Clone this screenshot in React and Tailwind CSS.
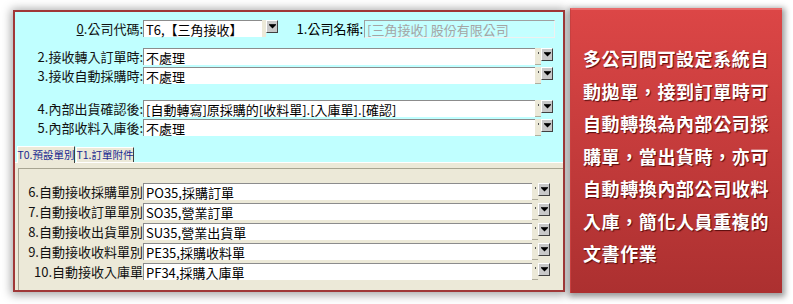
const cjk = { fontFamily: '"Noto Sans CJK TC", "Noto Sans CJK SC", sans-serif' };

const upper = [
  { label: "2.接收轉入訂單時:", value: "不處理" },
  { label: "3.接收自動採購時:", value: "不處理" },
];
const upper2 = [
  { label: "4.內部出貨確認後:", value: "[自動轉寫]原採購的[收料單].[入庫單].[確認]" },
  { label: "5.內部收料入庫後:", value: "不處理" },
];
const lower = [
  { label: "6.自動接收採購單別", value: "PO35,採購訂單" },
  { label: "7.自動接收訂單單別", value: "SO35,營業訂單" },
  { label: "8.自動接收出貨單別", value: "SU35,營業出貨單" },
  { label: "9.自動接收收料單別", value: "PE35,採購收料單" },
  { label: "10.自動接收入庫單", value: "PF34,採購入庫單" },
];
const note = [
  "多公司間可設定系統自",
  "動拋單，接到訂單時可",
  "自動轉換為內部公司採",
  "購單，當出貨時，亦可",
  "自動轉換內部公司收料",
  "入庫，簡化人員重複的",
  "文書作業",
];

function DropBtn() {
  return (
    <div className="w-[12px] h-[13px] bg-[#c8c8c8] border-t border-l border-white border-r border-b border-r-[#404040] border-b-[#404040] flex items-center justify-center">
      <svg width="7" height="5" viewBox="0 0 7 5">
        <rect x="0" y="0" width="7" height="1" fill="#222" />
        <path d="M0 1 H7 L3.5 4.5 Z" fill="#000" />
      </svg>
    </div>
  );
}

function Combo({ value, tail = "bg-[#ece9d8]" }) {
  return (
    <div className="flex-1 flex h-[19px]">
      <div className="flex-1 h-[17px] flex items-center bg-white border-t border-l border-[#8c8c8c] pl-[2px] text-[13px] leading-none whitespace-nowrap overflow-hidden text-black">
        {value}
      </div>
      <div className={"w-[6px] h-[17px] relative border-b border-[#b0ad9c] " + tail}>
        <div className="absolute left-[3px] top-[4px] w-[1px] h-[2px] bg-[#555]" />
      </div>
      <DropBtn />
    </div>
  );
}

function Row({ label, value, labelW, tail }) {
  return (
    <div className="flex items-start h-[19px]">
      <div className="h-[17px] flex items-center justify-end text-[13px] leading-none text-[#111] whitespace-nowrap" style={{ width: labelW }}>
        {label}
      </div>
      <Combo value={value} tail={tail} />
    </div>
  );
}

export default function App() {
  return (
    <div className="w-[793px] h-[304px] bg-white flex items-start pl-[13px] pt-[8px] gap-[5px]" style={cjk}>
      {/* MAIN FORM */}
      <div className="w-[552px] h-[282px] mt-[2px] border-2 border-[#a03838] bg-[#c0ffff] flex flex-col shadow-[0_1px_9px_2px_rgba(0,0,0,0.35)]">
        <div className="pt-[8px] pr-[10px] flex flex-col">
          <div className="flex items-start h-[19px]">
            <div className="w-[128px] h-[17px] flex items-center justify-end text-[13px] leading-none text-[#111]">
              <span className="underline">0</span>.公司代碼:
            </div>
            <div className="w-[135px] flex h-[19px]">
              <div className="flex-1 h-[17px] flex items-center bg-white border-t border-l border-[#8c8c8c] pl-[2px] text-[13px] leading-none whitespace-nowrap">
                T6,【三角接收】
              </div>
              <div className="w-[4px] h-[17px] bg-[#ece9d8]" />
              <DropBtn />
            </div>
            <div className="w-[85px] h-[17px] flex items-center justify-end text-[13px] leading-none text-black">
              1.公司名稱:
            </div>
            <div className="flex-1 ml-[1px] mr-[-2px] h-[18px] flex items-center border-t border-l border-[#a0a0a0] border-r border-b border-r-[#f0f0f0] border-b-[#f0f0f0] pl-[2px] text-[13px] leading-none text-[#a4a4a4] bg-[#c4ffff]">
              [三角接收] 股份有限公司
            </div>
          </div>

          <div className="mt-[9px]">
            {upper.map((r) => (
              <Row key={r.label} {...r} labelW={128} tail="bg-[#ece9d8]" />
            ))}
          </div>
          <div className="mt-[14px]">
            {upper2.map((r) => (
              <Row key={r.label} {...r} labelW={128} tail="bg-[#ece9d8]" />
            ))}
          </div>
        </div>

        {/* TABS */}
        <div className="mt-[7px] h-[17px] pl-[2px] flex items-end gap-[1px] text-[10.5px] leading-none text-[#1a2a90] whitespace-nowrap">
          <div className="w-[58px] h-[17px] bg-[#ece9d8] border-t border-l border-white border-r border-r-[#404040] flex items-center justify-center relative z-10 mb-[-1px]">
            T0.預設單別
          </div>
          <div className="w-[58px] h-[15px] bg-[#ece9d8] border-t border-l border-white border-r border-r-[#404040] flex items-center justify-center">
            T1.訂單附件
          </div>
        </div>

        {/* TAB PAGE */}
        <div className="flex-1 bg-[#ece9d8] border-t border-white pt-[5px] pl-[3px]">
          <div className="h-full border-t border-l border-[#a8a592] pt-[14px] pr-[13px]">
            {lower.map((r) => (
              <div key={r.label} className="mb-[1px]">
                <Row {...r} labelW={124} tail="bg-[#ece9d8]" />
              </div>
            ))}
          </div>
        </div>
      </div>

      {/* NOTE */}
      <div className="w-[212px] h-[285px] bg-gradient-to-b from-[#dc4646] to-[#ac3030] border-t-2 border-t-[#e86a6a] border-l border-l-[#c84040] shadow-[1px_2px_6px_2px_rgba(0,0,0,0.4)] pt-[32px] pl-[12px]">
        {note.map((line) => (
          <div key={line} className="text-[18px] leading-[32.5px] font-bold text-white tracking-[0.6px] whitespace-nowrap [text-shadow:1px_1px_1px_rgba(60,0,0,0.8)]">
            {line}
          </div>
        ))}
      </div>
    </div>
  );
}
